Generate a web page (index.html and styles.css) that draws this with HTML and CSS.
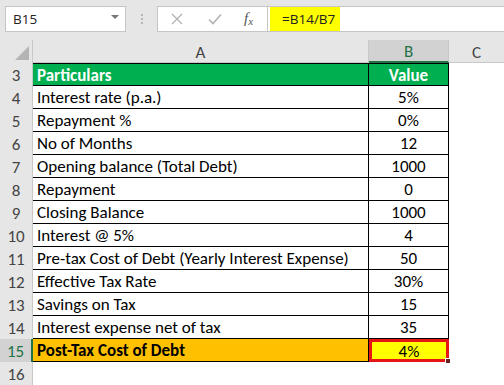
FILE: index.html
```html
<!DOCTYPE html>
<html>
<head>
<meta charset="utf-8">
<link rel="stylesheet" href="styles.css">
</head>
<body>
<div class="toolbar">
  <div class="namebox"><span class="nb-text">B15</span><span class="nb-arrow"></span></div>
  <div class="dots"><i></i><i></i><i></i></div>
  <div class="fbtns">
    <svg class="ic-x" width="12" height="12" viewBox="0 0 12 12"><path d="M1 1L11 11M11 1L1 11" stroke="#b3b3b3" stroke-width="1.4" fill="none"/></svg>
    <svg class="ic-check" width="14" height="12" viewBox="0 0 14 12"><path d="M1 6.5L5 10.5L13 1.5" stroke="#b3b3b3" stroke-width="1.6" fill="none"/></svg>
    <span class="fx">f<sub>x</sub></span>
  </div>
  <div class="finput"><span class="formula">=B14/B7</span></div>
</div>
<div class="sheet">
  <div class="corner"><span class="tri"></span></div>
  <div class="colh">A</div>
  <div class="colh sel">B</div>
  <div class="colh last">C</div>

  <div class="rowh">3</div><div class="c a head first">Particulars</div><div class="c b head first">Value</div><div class="blank"></div>
  <div class="rowh">4</div><div class="c a">Interest rate (p.a.)</div><div class="c b">5%</div><div class="blank"></div>
  <div class="rowh">5</div><div class="c a">Repayment %</div><div class="c b">0%</div><div class="blank"></div>
  <div class="rowh">6</div><div class="c a">No of Months</div><div class="c b">12</div><div class="blank"></div>
  <div class="rowh">7</div><div class="c a">Opening balance (Total Debt)</div><div class="c b">1000</div><div class="blank"></div>
  <div class="rowh">8</div><div class="c a">Repayment</div><div class="c b">0</div><div class="blank"></div>
  <div class="rowh">9</div><div class="c a">Closing Balance</div><div class="c b">1000</div><div class="blank"></div>
  <div class="rowh">10</div><div class="c a">Interest @ 5%</div><div class="c b">4</div><div class="blank"></div>
  <div class="rowh">11</div><div class="c a">Pre-tax Cost of Debt (Yearly Interest Expense)</div><div class="c b">50</div><div class="blank"></div>
  <div class="rowh">12</div><div class="c a">Effective Tax Rate</div><div class="c b">30%</div><div class="blank"></div>
  <div class="rowh">13</div><div class="c a">Savings on Tax</div><div class="c b">15</div><div class="blank"></div>
  <div class="rowh">14</div><div class="c a">Interest expense net of tax</div><div class="c b">35</div><div class="blank"></div>
  <div class="rowh selrow">15</div><div class="c a total">Post-Tax Cost of Debt</div><div class="c b result">4%<span class="handle"></span></div><div class="blank"></div>
  <div class="rowh">16</div><div class="blank"></div><div class="blank"></div><div class="blank"></div>
</div>
</body>
</html>
```
FILE: styles.css
```css
* { box-sizing: border-box; }
html, body { margin: 0; padding: 0; }
body {
  width: 504px;
  height: 385px;
  overflow: hidden;
  background: #e6e6e6;
  font-family: Carlito, Lato, "Liberation Sans", sans-serif;
}
.toolbar {
  height: 40px;
  display: flex;
  align-items: flex-start;
  padding-top: 6px;
  padding-left: 5px;
}
.namebox {
  width: 121px;
  height: 26px;
  background: #fff;
  border: 1px solid #c6c6c6;
  display: flex;
  align-items: center;
  justify-content: space-between;
  padding: 0 6px 0 7px;
  font-family: "Open Sans", "Liberation Sans", sans-serif;
  font-size: 13.5px;
  color: #222;
}
.nb-arrow {
  width: 0; height: 0;
  border-left: 4px solid transparent;
  border-right: 4px solid transparent;
  border-top: 4px solid #777;
  margin-top: -4px;
}
.dots {
  width: 31px;
  height: 26px;
  display: flex;
  flex-direction: column;
  align-items: center;
  justify-content: center;
  gap: 2px;
}
.dots i { width: 2px; height: 2px; background: #b5b5b5; display: block; }
.fbtns {
  width: 110px;
  height: 26px;
  background: #fff;
  border: 1px solid #c6c6c6;
  border-right: none;
  display: flex;
  align-items: center;
  padding-left: 13px;
}
.ic-x { margin-right: 25px; }
.ic-check { margin-right: 22px; }
.fx {
  font-family: "Liberation Serif", serif;
  font-style: italic;
  font-size: 15px;
  color: #555;
  line-height: 1;
}
.fx sub { font-size: 11px; vertical-align: -2px; }
.finput {
  flex: 1;
  height: 26px;
  background: #fff;
  border: 1px solid #c6c6c6;
  border-right: none;
  padding: 0 0 0 2px;
  display: flex;
}
.formula {
  background: #ffff00;
  width: 70px;
  height: 24px;
  padding-left: 12px;
  font-family: "Open Sans", "Liberation Sans", sans-serif;
  font-size: 13.5px;
  line-height: 24px;
  color: #222;
}
.sheet {
  display: grid;
  grid-template-columns: 33px 336px 80px 1fr;
  grid-auto-rows: 23px;
  background: #fff;
}
.corner, .colh, .rowh {
  background: #e6e6e6;
  color: #444;
  font-size: 17px;
}
.corner {
  position: relative;
  border-right: 1px solid #c8c8c8;
}
.tri {
  position: absolute;
  right: 3px;
  bottom: 3px;
  width: 0; height: 0;
  border-left: 14px solid transparent;
  border-bottom: 14px solid #b4b4b4;
}
.colh {
  display: flex;
  align-items: center;
  justify-content: center;
  border-right: 1px solid #c8c8c8;
  border-bottom: 1px solid #c8c8c8;
  padding-top: 2px;
}
.colh.sel {
  background: #d2d2d2;
  color: #217346;
  border-bottom: 2px solid #217346;
}
.colh.last { border-right: none; }
.rowh {
  display: flex;
  align-items: center;
  justify-content: center;
  border-right: 1px solid #c8c8c8;
  padding-top: 1px;
}
.rowh.selrow {
  background: #d2d2d2;
  color: #217346;
  border-right: 2px solid #217346;
}
.c {
  font-size: 17px;
  color: #000;
  display: flex;
  align-items: center;
  border-bottom: 1px solid #000;
  border-right: 1px solid #000;
  padding-top: 1px;
  white-space: nowrap;
}
.c.a { padding-left: 4px; }
.c.b { justify-content: center; }
.c.first { border-top: 1px solid #000; }
.head {
  background: #00b050;
  color: #fff;
  font-weight: bold;
}
.total {
  background: #ffc000;
  font-weight: bold;
}
.result {
  background: #ffff00;
  position: relative;
  border: 3px solid #e81515;
}
.handle {
  position: absolute;
  right: -5px;
  bottom: -5px;
  width: 6px;
  height: 6px;
  background: #6b2020;
  border: 1px solid #fff;
}
.blank { background: #fff; }
```
